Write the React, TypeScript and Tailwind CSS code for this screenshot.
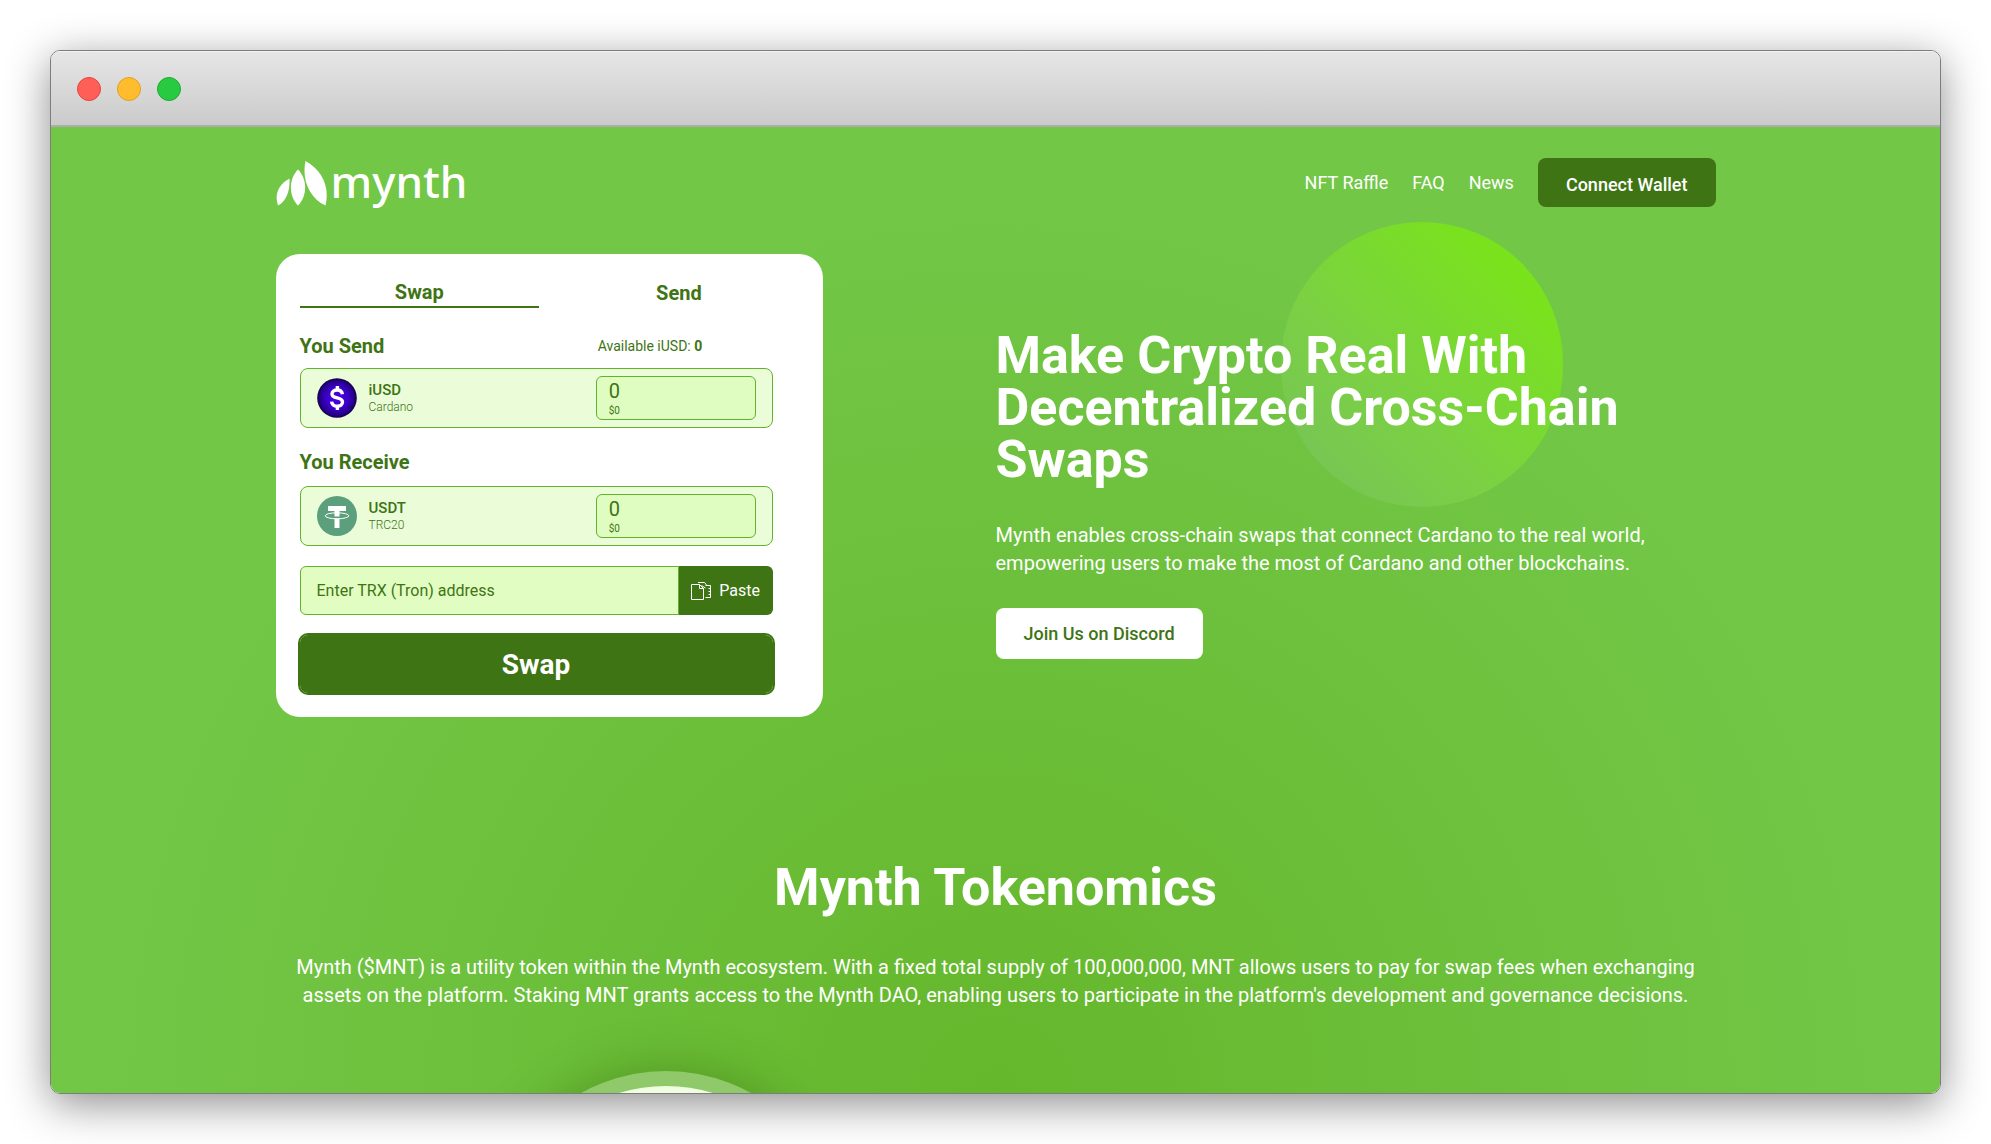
import { useState } from "react";

function Logo() {
  return (
    <a href="#" aria-label="mynth" className="flex items-start gap-1 text-white">
      <svg viewBox="0 -2 51 48" className="h-12 w-[51px]" fill="currentColor" aria-hidden="true">
        <path d="M13.500 18.500C14 30 11 40.500 2 45.500C-1.500 35.500 1.500 25 13.500 18.500Z" />
        <path d="M22 9.500C31.500 19 31.500 36 22 45.500C12.500 36 12.500 19 22 9.500Z" />
        <path d="M29.500 1C46 10 54 27 49.500 45.500C33.500 38 25.500 20 29.500 1Z" />
      </svg>
      <span className="font-['Noto_Sans'] text-[44px] leading-[46px] font-medium">mynth</span>
    </a>
  );
}

function UsdIcon() {
  return (
    <svg viewBox="0 0 40 40" className="size-10" aria-hidden="true">
      <defs>
        <radialGradient id="iusd">
          <stop offset="0" stopColor="#4a00e6" />
          <stop offset="0.55" stopColor="#3d00c8" />
          <stop offset="0.85" stopColor="#26008c" />
          <stop offset="1" stopColor="#130044" />
        </radialGradient>
      </defs>
      <circle cx="20" cy="20" r="19.800" fill="url(#iusd)" />
      <path
        d="M25.400 16.200C25 13.300 23 12 20.200 12C17.200 12 15 13.400 15 15.900C15 21.500 25.500 18.200 25.500 24C25.500 26.600 23.300 28.200 20.300 28.200C17 28.200 14.900 26.600 14.600 23.600M20.400 8V12M20.400 28V32"
        fill="none"
        stroke="#fff"
        strokeWidth="3.400"
      />
    </svg>
  );
}

function TetherIcon() {
  return (
    <svg viewBox="0 0 40 40" className="size-10" aria-hidden="true">
      <circle cx="20" cy="20" r="20" fill="#5b9f7c" />
      <path d="M11 10H29V15H22.500V20.500H17.500V15H11ZM17.500 22.600H22.500V32H17.500Z" fill="#fff" />
      <ellipse cx="20" cy="19.800" rx="11.800" ry="3" fill="none" stroke="#fff" strokeWidth="1" />
    </svg>
  );
}

function PasteIcon() {
  return (
    <svg viewBox="0 0 20 18" className="h-[18px] w-5" fill="none" stroke="#fff" aria-hidden="true">
      <path d="M0.500 2.500H8.500L12.500 6.500V17.500H0.500ZM8.500 2.500V6.500H12.500" />
      <path d="M7 0.500H13.500L15.500 3M10.500 3.500L14.500 6M14.500 3.500H19.500V15.500H14.500M17.500 6.500H19M17.500 9.500H19M17.500 12.500H19" />
    </svg>
  );
}

type TokenRowProps = {
  id: string;
  icon: React.ReactNode;
  name: string;
  network: string;
};

function TokenRow({ id, icon, name, network }: TokenRowProps) {
  const [amount, setAmount] = useState("0");
  return (
    <div className="flex h-[60px] items-center justify-between rounded-lg border border-[#62b22c] bg-[#eafdd8] px-4">
      <div className="flex items-center gap-3">
        {icon}
        <div>
          <div className="text-[15px] leading-[18px] font-medium">{name}</div>
          <div className="text-xs leading-4 font-light">{network}</div>
        </div>
      </div>
      <div className="flex h-11 w-40 flex-col justify-center rounded-md border border-[#62b22c] bg-[#dffdc0] px-3 pt-1">
        <input
          id={id}
          aria-label={`${name} amount`}
          value={amount}
          onChange={(e) => setAmount(e.target.value)}
          className="h-[22px] w-full bg-transparent text-xl leading-[22px] outline-none"
        />
        <div className="text-[10px] leading-[18px]">$0</div>
      </div>
    </div>
  );
}

function SwapCard() {
  return (
    <section className="w-[76%] rounded-3xl bg-white px-6 pt-6 pb-6 text-[#3e7414]">
      <div className="grid grid-cols-2 gap-5 text-xl font-bold">
        <button className="h-[30px] border-b-2 border-[#3e7414] leading-7">Swap</button>
        <button className="h-[30px] leading-[30px]">Send</button>
      </div>
      <div className="mr-[26px]">
        <div className="mt-6 flex h-7 items-center justify-between">
          <label htmlFor="send-amount" className="text-xl font-bold">
            You Send
          </label>
          <p className="w-[175px] text-sm">
            Available iUSD: <b>0</b>
          </p>
        </div>
        <div className="mt-2">
          <TokenRow id="send-amount" icon={<UsdIcon />} name="iUSD" network="Cardano" />
        </div>
        <label htmlFor="receive-amount" className="mt-5 mb-2.5 block text-xl font-bold">
          You Receive
        </label>
        <TokenRow id="receive-amount" icon={<TetherIcon />} name="USDT" network="TRC20" />
        <div className="mt-5 flex h-[49px]">
          <input
            aria-label="Enter TRX (Tron) address"
            placeholder="Enter TRX (Tron) address"
            className="min-w-0 flex-1 rounded-l-md border border-[#62b22c] bg-[#e2fdc2] px-4 outline-none placeholder:text-[#3e7414]"
          />
          <button className="flex w-[94px] items-center justify-center gap-2 rounded-r-md bg-[#3e7414] text-white">
            <PasteIcon />
            Paste
          </button>
        </div>
        <button className="mt-5 block h-[58px] w-full rounded-lg bg-[#3e7414] pt-0.5 text-[28px] font-bold text-white outline-2 outline-[#3e7414]">
          Swap
        </button>
      </div>
    </section>
  );
}

export default function App() {
  return (
    <div className="h-screen bg-white p-[50px] font-[Roboto,sans-serif]">
      <div className="flex h-full flex-col overflow-hidden rounded-[10px] border border-[#7d7d7d] shadow-[0_10px_44px_rgba(0,0,0,0.45)]">
        <div className="flex h-[76px] shrink-0 items-center gap-4 border-t border-b-2 border-t-[#f3f3f3] border-b-[#adadad] bg-linear-to-b from-[#e6e6e6] to-[#cbcbcb] px-[26px]">
          <span className="size-6 rounded-full border border-[#e2453f] bg-[#ff5f57]" />
          <span className="size-6 rounded-full border border-[#dfa023] bg-[#ffbd2e]" />
          <span className="size-6 rounded-full border border-[#1dad2b] bg-[#28ca42]" />
        </div>

        <div className="min-h-0 flex-1 overflow-hidden bg-[radial-gradient(circle_900px_at_50%_100%,#65b72b,#72c747)] text-white">
          <div className="mx-auto max-w-[1440px]">
            <header className="flex h-20 items-start justify-between pt-[31px]">
              <Logo />
              <nav className="flex items-center gap-6 text-lg">
                <a href="#raffle">NFT Raffle</a>
                <a href="#faq">FAQ</a>
                <a href="#news">News</a>
                <button className="h-[49px] rounded-lg bg-[#3e7414] px-7 pt-1 font-medium">Connect Wallet</button>
              </nav>
            </header>

            <main>
              <div className="mt-[47px] grid grid-cols-2 items-start">
                <SwapCard />
                <section className="relative pt-19">
                  <div className="absolute -top-8 left-[285px] h-[285px] w-[282px] rounded-full bg-[linear-gradient(225deg,#79e516_10%,#7bd143_60%,#78c653_85%)]" />
                  <div className="relative">
                    <h1 className="max-w-[660px] text-[52px] leading-[52px] font-bold">
                      Make Crypto Real With Decentralized Cross-Chain Swaps
                    </h1>
                    <p className="mt-[35px] max-w-[680px] text-xl leading-7">
                      Mynth enables cross-chain swaps that connect Cardano to the real world, empowering users to make
                      the most of Cardano and other blockchains.
                    </p>
                    <a
                      href="#discord"
                      className="mt-[31px] inline-flex h-[51px] items-center rounded-lg bg-white px-7 text-lg font-medium text-[#3e7414]"
                    >
                      Join Us on Discord
                    </a>
                  </div>
                </section>
              </div>

              <section className="mt-[145px] text-center">
                <h2 className="text-[52px] leading-[52px] font-bold">Mynth Tokenomics</h2>
                <p className="mx-auto mt-[39px] max-w-[1408px] text-xl leading-7">
                  Mynth ($MNT) is a utility token within the Mynth ecosystem. With a fixed total supply of 100,000,000,
                  MNT allows users to pay for swap fees when exchanging assets on the platform. Staking MNT grants
                  access to the Mynth DAO, enabling users to participate in the platform's development and governance
                  decisions.
                </p>
                <div className="mt-[62px] ml-[215px] size-[350px] rounded-full border-[15px] border-[#8fc96a] bg-[#effde0] shadow-[0_0_50px_rgba(50,90,10,0.4)]" />
              </section>
            </main>
          </div>
        </div>
      </div>
    </div>
  );
}
